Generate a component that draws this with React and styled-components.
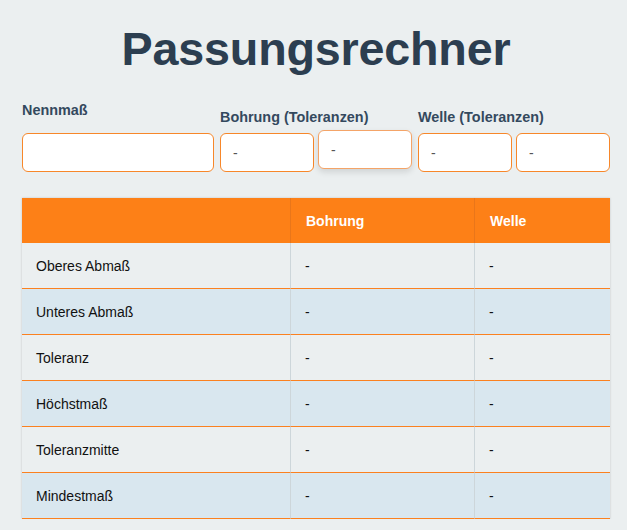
import React from 'react';
import styled, { createGlobalStyle, css } from 'styled-components';

const GlobalStyle = createGlobalStyle`
  html, body {
    margin: 0;
    padding: 0;
    background: #ebeff0;
    font-family: "Liberation Sans", Arial, Helvetica, sans-serif;
  }
`;

const Page = styled.main`
  width: 588px;
  padding: 0 0 0 22px;
`;

const Title = styled.h1`
  margin: 0;
  padding-top: 22px;
  height: 76px;
  font-size: 46.7px;
  font-weight: bold;
  line-height: 54px;
  color: #2c3e50;
  text-align: center;
  letter-spacing: -0.2px;
`;

const Fields = styled.section`
  display: flex;
  align-items: flex-end;
  gap: 6px;
  margin-top: 4px;
`;

const Group = styled.div`
  display: flex;
  flex-direction: column;
`;

const Label = styled.label`
  font-size: 14.4px;
  font-weight: bold;
  color: #34495e;
  line-height: 16px;
  margin-bottom: ${(p) => (p.$high ? '15px' : '8px')};
`;

const Inputs = styled.div`
  display: flex;
  gap: 4px;
`;

const Input = styled.input`
  box-sizing: border-box;
  width: ${(p) => (p.$wide ? '192px' : '94px')};
  height: 39px;
  padding: 0 12px;
  border: 1px solid #f7872a;
  border-radius: 6px;
  background: #fff;
  font-family: inherit;
  font-size: 14px;
  color: #333;
  outline: none;

  &::placeholder {
    color: #555;
  }

  ${(p) =>
    p.$active &&
    css`
      transform: translateY(-3px);
      border-color: #f4a468;
      box-shadow: 0 3px 6px rgba(0, 0, 0, 0.12);
    `}
`;

const Table = styled.table`
  width: 588px;
  margin-top: 26px;
  border-collapse: separate;
  border-spacing: 0;
  box-shadow: 0 0 2px rgba(0, 0, 0, 0.18);
  font-size: 14px;
`;

const HeadCell = styled.th`
  height: 45px;
  padding: 0 15px;
  background: #fd8017;
  color: #fff;
  font-size: 14px;
  font-weight: bold;
  text-align: left;
  border-left: 1px solid #e9761a;

  &:first-child {
    border-left: none;
  }
`;

const Row = styled.tr`
  background: ${(p) => (p.$alt ? '#d9e7ef' : '#ebeff0')};
`;

const Cell = styled.td`
  box-sizing: border-box;
  height: 46px;
  padding: 0 14px;
  color: #111;
  border-left: 1px solid #cdd6da;
  border-bottom: 1px solid #fb8120;

  &:first-child {
    border-left: none;
  }
`;

const rows = [
  'Oberes Abmaß',
  'Unteres Abmaß',
  'Toleranz',
  'Höchstmaß',
  'Toleranzmitte',
  'Mindestmaß',
];

const App = () => (
  <>
    <GlobalStyle />
    <Page>
      <Title>Passungsrechner</Title>
      <Fields>
        <Group>
          <Label $high>Nennmaß</Label>
          <Inputs>
            <Input $wide type="text" />
          </Inputs>
        </Group>
        <Group>
          <Label>Bohrung (Toleranzen)</Label>
          <Inputs>
            <Input type="text" placeholder="-" />
            <Input $active type="text" placeholder="-" />
          </Inputs>
        </Group>
        <Group>
          <Label>Welle (Toleranzen)</Label>
          <Inputs>
            <Input type="text" placeholder="-" />
            <Input type="text" placeholder="-" />
          </Inputs>
        </Group>
      </Fields>
      <Table>
        <colgroup>
          <col style={{ width: '268px' }} />
          <col style={{ width: '184px' }} />
          <col style={{ width: '136px' }} />
        </colgroup>
        <thead>
          <tr>
            <HeadCell />
            <HeadCell>Bohrung</HeadCell>
            <HeadCell>Welle</HeadCell>
          </tr>
        </thead>
        <tbody>
          {rows.map((name, i) => (
            <Row key={name} $alt={i % 2 === 1}>
              <Cell>{name}</Cell>
              <Cell>-</Cell>
              <Cell>-</Cell>
            </Row>
          ))}
        </tbody>
      </Table>
    </Page>
  </>
);

export default App;
